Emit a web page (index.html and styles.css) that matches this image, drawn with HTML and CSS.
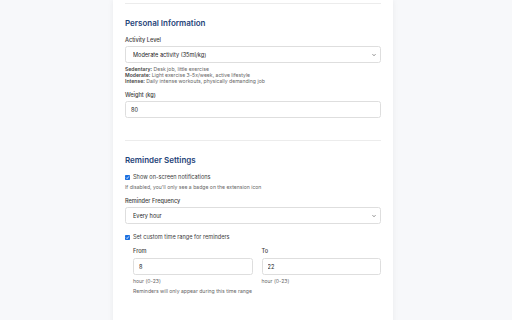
FILE: index.html
```html
<!DOCTYPE html>
<html lang="en">
<head>
    <meta charset="UTF-8">
    <meta name="viewport" content="width=device-width, initial-scale=1.0">
    <title>Settings</title>
    <link rel="stylesheet" href="styles.css">
</head>
<body>
    <div class="card">
        <hr class="divider">

        <section class="settings-section">
            <h2>Personal Information</h2>
            <div class="form-group">
                <label for="activityLevel">Activity Level</label>
                <select id="activityLevel">
                    <option>Moderate activity (35ml/kg)</option>
                </select>
                <p class="help">
                    <b>Sedentary:</b> Desk job, little exercise<br>
                    <b>Moderate:</b> Light exercise 3-5x/week, active lifestyle<br>
                    <b>Intense:</b> Daily intense workouts, physically demanding job
                </p>
            </div>
            <div class="form-group">
                <label for="weight">Weight (kg)</label>
                <input type="number" id="weight" value="80">
            </div>
        </section>

        <hr class="divider">

        <section class="settings-section">
            <h2>Reminder Settings</h2>
            <div class="form-group">
                <label class="check">
                    <input type="checkbox" checked>
                    Show on-screen notifications
                </label>
                <p class="help hint">If disabled, you'll only see a badge on the extension icon</p>
            </div>
            <div class="form-group">
                <label for="frequency">Reminder Frequency</label>
                <select id="frequency">
                    <option>Every hour</option>
                </select>
            </div>
            <div class="form-group custom-range">
                <label class="check">
                    <input type="checkbox" checked>
                    Set custom time range for reminders
                </label>
                <div class="time-range">
                    <div class="time-field">
                        <label for="fromHour">From</label>
                        <input type="number" id="fromHour" value="8">
                        <p class="help">hour (0-23)</p>
                    </div>
                    <div class="time-field">
                        <label for="toHour">To</label>
                        <input type="number" id="toHour" value="22">
                        <p class="help">hour (0-23)</p>
                    </div>
                </div>
                <p class="help range-note">Reminders will only appear during this time range</p>
            </div>
        </section>
    </div>
</body>
</html>
```

FILE: styles.css
```css
body {
    font-family: Inter, "Noto Sans", sans-serif;
    margin: 0;
    padding: 0 6px 0 0;
    background-color: #f7f8fa;
    color: #333;
}
.card {
    width: 280px;
    margin: 0 auto;
    padding: 3px 12px 0;
    box-sizing: border-box;
    min-height: 330px;
    background: white;
    box-shadow: 0 0 6px rgba(0, 0, 0, 0.06);
}
.divider {
    border: none;
    border-top: 1px solid #ececec;
    margin: 0;
}
.settings-section {
    padding: 14px 0 13px;
}
h2 {
    margin: 0 0 8px;
    font-size: 8px;
    line-height: 10px;
    font-weight: 600;
    color: #1f4479;
}
.form-group {
    margin-bottom: 7px;
}
.form-group:last-child {
    margin-bottom: 0;
}
label {
    display: block;
    margin-bottom: 2px;
    font-size: 5.6px;
    line-height: 8px;
    font-weight: 500;
    color: #3c3c3c;
}
select, input[type=number] {
    display: block;
    width: 100%;
    height: 17px;
    margin: 0;
    padding: 0 5px;
    box-sizing: border-box;
    border: 1px solid #dedede;
    border-radius: 2.5px;
    background: white;
    font-family: inherit;
    font-size: 5.6px;
    color: #222;
    -moz-appearance: textfield;
}
input[type=number]::-webkit-inner-spin-button {
    -webkit-appearance: none;
}
select {
    -webkit-appearance: none;
    appearance: none;
    padding-left: 7px;
    background-image: url("data:image/svg+xml,%3Csvg xmlns='http://www.w3.org/2000/svg' width='8' height='8' viewBox='0 0 8 8'%3E%3Cpath d='M2.5 3.2 4 4.7 5.5 3.2' fill='none' stroke='%23555' stroke-width='0.7'/%3E%3C/svg%3E");
    background-repeat: no-repeat;
    background-position: right 2px center;
    background-size: 8px 8px;
}
.help {
    margin: 3px 0 0;
    font-size: 5.1px;
    line-height: 6px;
    color: #666;
}
.help b {
    font-weight: 600;
    color: #444;
}
.check {
    display: flex;
    align-items: center;
    gap: 3px;
    margin: 0;
    font-weight: 400;
}
.check input {
    -webkit-appearance: none;
    appearance: none;
    flex: none;
    width: 5px;
    height: 5px;
    margin: 0;
    border-radius: 0.8px;
    background: #1a6fe0 url("data:image/svg+xml,%3Csvg xmlns='http://www.w3.org/2000/svg' viewBox='0 0 10 10'%3E%3Cpath d='M2.2 5.2 4.2 7.2 7.8 2.8' fill='none' stroke='white' stroke-width='1.6'/%3E%3C/svg%3E") center / 100% 100% no-repeat;
}
.hint {
    margin-top: 3px;
}
.settings-section .form-group:nth-child(3) {
    margin-bottom: 9px;
}
.time-range {
    display: grid;
    grid-template-columns: 1fr 1fr;
    gap: 9px;
    margin: 6px 0 0 8px;
}
.time-field label {
    margin-bottom: 3px;
}
.range-note {
    margin: 4px 0 0 8px;
}
```
